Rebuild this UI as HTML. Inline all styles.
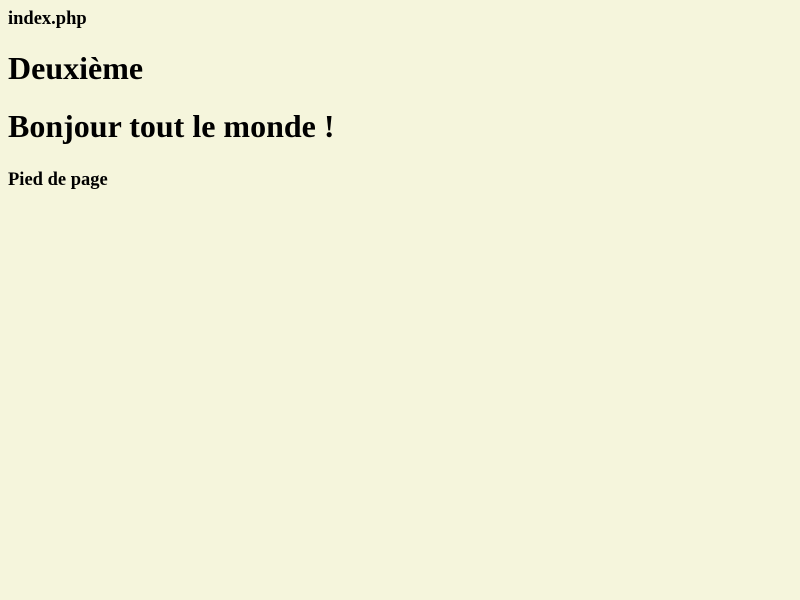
<!DOCTYPE html>
<html><head><meta charset="utf-8"><style>
html,body{margin:0;padding:0;background:#f5f5dc;}
body{margin:8px;font-family:"Liberation Serif",serif;color:#000;}
h1{font-size:32px;margin:21px 0;line-height:37px;}
.b{font-weight:bold;font-size:18.5px;line-height:20px;}
</style></head><body>
<div class="b" style="padding-top:1px">index.php</div>
<h1 style="margin-top:21px">Deuxième</h1>
<h1>Bonjour tout le monde !</h1>
<div class="b" style="margin-top:25px">Pied de page</div>
</body></html>
